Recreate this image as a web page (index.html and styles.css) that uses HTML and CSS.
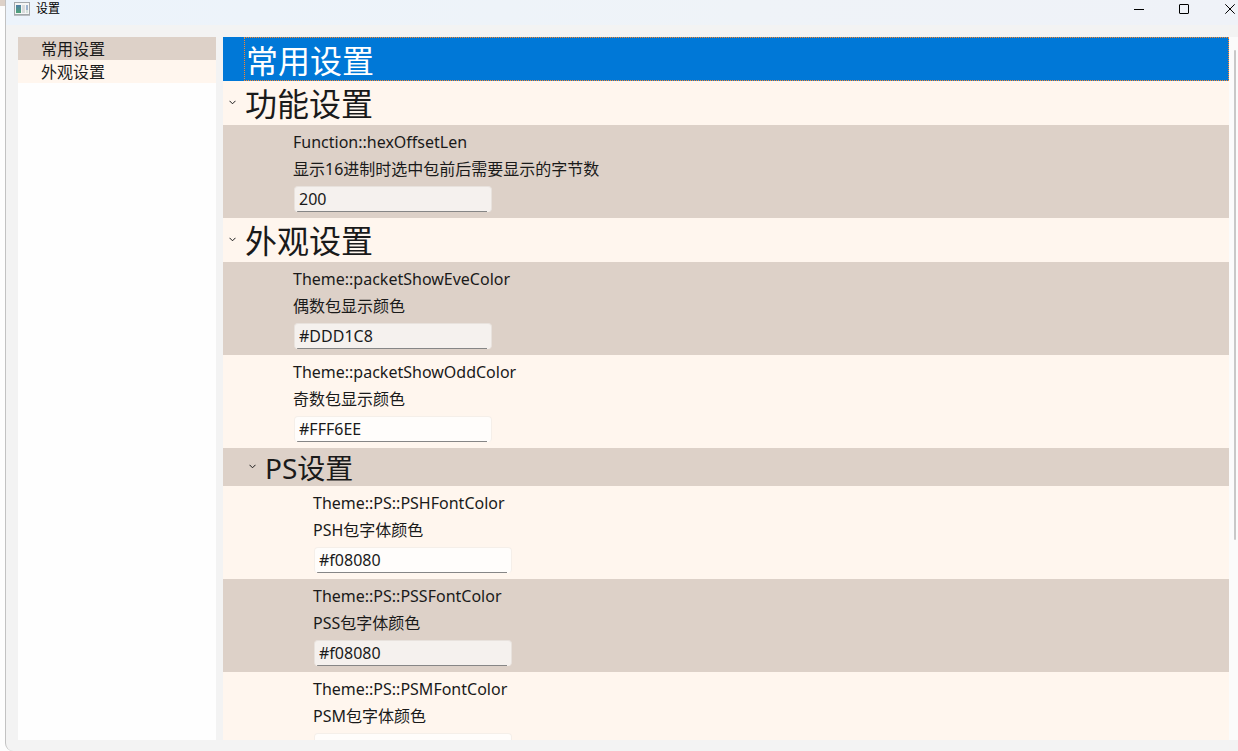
FILE: index.html
```html
<!DOCTYPE html>
<html lang="zh-CN">
<head>
<meta charset="utf-8">
<title>设置</title>
<meta name="viewport" content="width=device-width, initial-scale=1">
<link rel="stylesheet" href="styles.css">
</head>
<body class="desktop">
<div class="window">
  <header class="titlebar">
    <svg class="app-icon" width="16" height="14" viewBox="0 0 16 14" aria-hidden="true">
      <defs>
        <linearGradient id="pane" x1="0" y1="0" x2="0" y2="1">
          <stop offset="0" stop-color="#4f7fa6"/>
          <stop offset="1" stop-color="#4fa377"/>
        </linearGradient>
      </defs>
      <rect x="0.5" y="0.5" width="15" height="12" fill="#f4f5f5" stroke="#a3a8ac"/>
      <rect x="0" y="13" width="16" height="1" fill="#b9bdc1"/>
      <rect x="2" y="3" width="5" height="8" fill="url(#pane)"/>
      <rect x="8" y="3" width="3" height="8" fill="#d9dbdc"/>
      <rect x="12" y="3" width="2" height="5" fill="#9db3cf"/>
      <rect x="12" y="8" width="2" height="3" fill="#d5e2dc"/>
    </svg>
    <h1 class="window-title">设置</h1>
    <div class="window-controls">
      <button class="control" type="button" aria-label="最小化"><svg width="10" height="10" viewBox="0 0 10 10"><path d="M1 5.5H11"/></svg></button>
      <button class="control" type="button" aria-label="最大化"><svg width="10" height="10" viewBox="0 0 10 10"><rect x="0.5" y="0.5" width="9" height="9" rx="0.5"/></svg></button>
      <button class="control" type="button" aria-label="关闭"><svg width="10" height="10" viewBox="0 0 10 10"><path d="M0.3 0.3L9.7 9.7M9.7 0.3L0.3 9.7"/></svg></button>
    </div>
  </header>
  <div class="content">
    <nav class="sidebar">
      <a class="nav-item even" href="#common">常用设置</a>
      <a class="nav-item odd" href="#appearance">外观设置</a>
    </nav>
    <main class="panel">
      <div class="tree">
        <div class="heading selected" id="common"><span class="branch"></span><h2 class="heading-text">常用设置</h2></div>
        <div class="heading odd">
          <button class="branch" type="button" aria-label="折叠功能设置"><svg width="7" height="5" viewBox="0 0 7 5"><path d="M0.5 0.8L3.5 3.8L6.5 0.8"/></svg></button>
          <h2 class="heading-text">功能设置</h2>
        </div>
        <div class="setting even">
          <label class="key" for="hex-len">Function::hexOffsetLen</label>
          <p class="description">显示16进制时选中包前后需要显示的字节数</p>
          <input class="field" id="hex-len" type="text" value="200">
        </div>
        <div class="heading odd" id="appearance">
          <button class="branch" type="button" aria-label="折叠外观设置"><svg width="7" height="5" viewBox="0 0 7 5"><path d="M0.5 0.8L3.5 3.8L6.5 0.8"/></svg></button>
          <h2 class="heading-text">外观设置</h2>
        </div>
        <div class="setting even">
          <label class="key" for="eve-color">Theme::packetShowEveColor</label>
          <p class="description">偶数包显示颜色</p>
          <input class="field" id="eve-color" type="text" value="#DDD1C8">
        </div>
        <div class="setting odd">
          <label class="key" for="odd-color">Theme::packetShowOddColor</label>
          <p class="description">奇数包显示颜色</p>
          <input class="field" id="odd-color" type="text" value="#FFF6EE">
        </div>
        <div class="heading nested even">
          <button class="branch" type="button" aria-label="折叠PS设置"><svg width="7" height="5" viewBox="0 0 7 5"><path d="M0.5 0.8L3.5 3.8L6.5 0.8"/></svg></button>
          <h3 class="heading-text">PS设置</h3>
        </div>
        <div class="setting nested odd">
          <label class="key" for="psh-color">Theme::PS::PSHFontColor</label>
          <p class="description">PSH包字体颜色</p>
          <input class="field" id="psh-color" type="text" value="#f08080">
        </div>
        <div class="setting nested even">
          <label class="key" for="pss-color">Theme::PS::PSSFontColor</label>
          <p class="description">PSS包字体颜色</p>
          <input class="field" id="pss-color" type="text" value="#f08080">
        </div>
        <div class="setting nested odd">
          <label class="key" for="psm-color">Theme::PS::PSMFontColor</label>
          <p class="description">PSM包字体颜色</p>
          <input class="field" id="psm-color" type="text" value="#f08080">
        </div>
      </div>
      <div class="scrollbar"><div class="thumb"></div></div>
    </main>
  </div>
</div>
</body>
</html>
```
FILE: styles.css
```css
* {
  box-sizing: border-box;
}

.desktop {
  height: 100vh;
  margin: 0;
  padding-left: 5px;
  overflow: hidden;
  background: linear-gradient(#ddd1c8 6px, #fdfdfd 6px);
  color: #1a1a1a;
  font-family: "Noto Sans", "Noto Sans CJK SC", sans-serif;
  font-size: 16px;
}

.window {
  display: flex;
  flex-direction: column;
  height: 100%;
  border-left: 1px solid #c2c2c2;
  border-bottom-left-radius: 8px;
  background: #f3f3f3;
  overflow: hidden;
}

.titlebar {
  display: flex;
  flex: none;
  align-items: flex-start;
  height: 25px;
  padding-left: 8px;
  background: linear-gradient(90deg, #ecf3fb, #eff3f8 60%, #eff2f8);
}

.app-icon {
  margin-top: 2px;
}

.window-title {
  margin: 0 0 0 6px;
  color: #000;
  font-size: 12px;
  font-weight: 400;
  line-height: 17px;
}

.window-controls {
  display: flex;
  margin-left: auto;
}

.control {
  display: flex;
  justify-content: flex-end;
  width: 46px;
  height: 18px;
  padding: 4px 3px 0 0;
  border: 0;
  background: none;
}

.control svg {
  overflow: visible;
  fill: none;
  stroke: #000;
}

.content {
  display: flex;
  flex: 1;
  gap: 7px;
  min-height: 0;
  padding: 12px 0 11px 12px;
}

.sidebar {
  flex: none;
  width: 198px;
  background: #fefefe;
}

.nav-item {
  display: block;
  height: 23px;
  padding-left: 23px;
  color: inherit;
  line-height: 25px;
  text-decoration: none;
}

.even {
  background: #ddd1c8;
}

.odd {
  background: #fff6ee;
}

.panel {
  display: flex;
  flex: 1;
  min-width: 0;
  overflow: hidden;
}

.tree {
  flex: 1;
  min-width: 0;
  overflow: hidden;
}

.heading {
  display: flex;
  height: 44px;
  font-size: 32px;
  line-height: 46px;
}

.heading.nested {
  height: 38px;
  padding-left: 20px;
  font-size: 28px;
  line-height: 40px;
}

.heading.selected {
  background: #0078d7;
  color: #fff;
}

.selected .heading-text {
  border: 1px dotted #ff8728;
}

.branch {
  display: flex;
  flex: none;
  align-items: center;
  justify-content: center;
  width: 21px;
  padding: 0 2px 1px 0;
  border: 0;
  background: none;
}

.branch svg {
  fill: none;
  stroke: #1a1a1a;
}

.heading-text {
  flex: 1;
  margin: 0;
  padding-left: 1px;
  font-size: inherit;
  font-weight: 400;
}

.setting {
  display: flex;
  flex-direction: column;
  align-items: flex-start;
  padding: 4px 0 6px 70px;
}

.setting.nested {
  padding-left: 90px;
}

.key,
.description {
  margin: 0;
  height: 27px;
  line-height: 27px;
}

.key {
  font-size: 16px;
}

.field {
  width: 198px;
  height: 26px;
  margin: 3px 0 0 1px;
  padding: 0 4px 1px;
  border: 1px solid #e8e2dd;
  border-bottom: 0;
  border-radius: 4px;
  outline: 0;
  background: linear-gradient(#868686, #868686) 2px bottom / 190px 1px no-repeat, #f5f1ee;
  color: inherit;
  font: inherit;
}

.odd .field {
  border-color: #f5efe9;
  background-color: #fffdfb;
}

.scrollbar {
  flex: none;
  width: 9px;
  padding: 13px 2px 0 5px;
  background: #fbfbfb;
}

.thumb {
  height: 71%;
  border-radius: 1px;
  background: #c8c8c8;
}
```
